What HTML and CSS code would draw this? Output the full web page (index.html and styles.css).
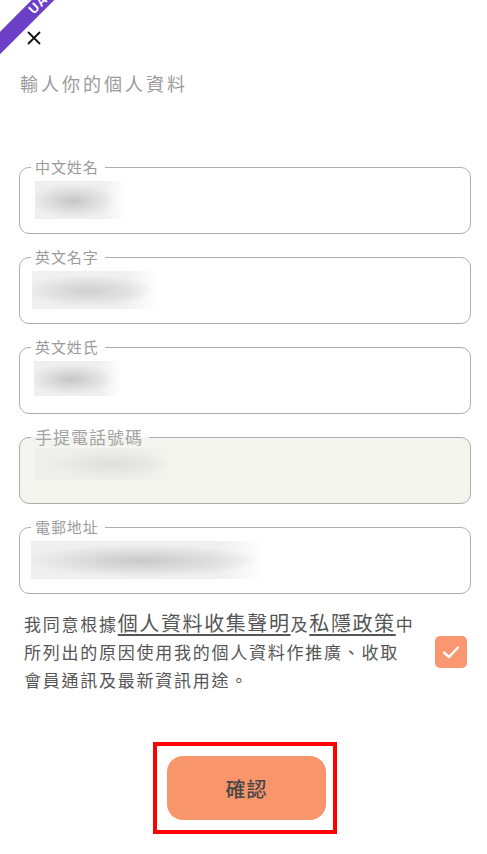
FILE: index.html
```html
<!DOCTYPE html>
<html lang="zh-Hant">

<head>
    <meta charset="UTF-8">
    <meta name="viewport" content="width=device-width, initial-scale=1.0">
    <title>個人資料</title>
    <link rel="stylesheet" href="styles.css">
</head>

<body>
    <div class="ribbon"><span>UAT</span></div>

    <header class="top">
        <button class="close" aria-label="關閉">
            <svg width="14" height="14" viewBox="0 0 14 14">
                <path d="M1.5 1.5 L12.5 12.5 M12.5 1.5 L1.5 12.5" stroke="#111" stroke-width="1.8" stroke-linecap="round" />
            </svg>
        </button>
        <h1 class="title">輸人你的個人資料</h1>
    </header>

    <form class="form">
        <fieldset class="field">
            <legend>中文姓名</legend>
            <div class="value"><span class="blur blur-1"></span></div>
        </fieldset>
        <fieldset class="field">
            <legend>英文名字</legend>
            <div class="value"><span class="blur blur-2"></span></div>
        </fieldset>
        <fieldset class="field">
            <legend>英文姓氏</legend>
            <div class="value"><span class="blur blur-3"></span></div>
        </fieldset>
        <fieldset class="field field-disabled">
            <legend>手提電話號碼</legend>
            <div class="value"><span class="blur blur-4"></span></div>
        </fieldset>
        <fieldset class="field">
            <legend>電郵地址</legend>
            <div class="value"><span class="blur blur-5"></span></div>
        </fieldset>

        <div class="consent">
            <p>我同意根據<a href="#">個人資料收集聲明</a>及<a href="#">私隱政策</a>中所列出的原因使用我的個人資料作推廣、收取會員通訊及最新資訊用途。</p>
            <span class="check">
                <svg width="20" height="16" viewBox="0 0 20 16">
                    <path d="M3 8.5 L8 13 L17 3.5" fill="none" stroke="#fff" stroke-width="2.4" stroke-linecap="round" stroke-linejoin="round" />
                </svg>
            </span>
        </div>

        <div class="submit-wrap">
            <div class="highlight">
                <button type="button" class="submit">確認</button>
            </div>
        </div>
    </form>
</body>

</html>
```

FILE: styles.css
```css
* {
    box-sizing: border-box;
}

body {
    margin: 0;
    background: #fff;
    font-family: "Noto Sans CJK TC", "Noto Sans", sans-serif;
    color: #555;
    min-height: 100vh;
    position: relative;
    overflow: hidden;
}

/* env ribbon in the corner */
.ribbon {
    position: absolute;
    top: 8px;
    left: -28px;
    width: 110px;
    height: 16px;
    background: #6b3fc6;
    color: #fff;
    transform: rotate(-45deg);
    transform-origin: center;
    text-align: center;
    font-family: "Liberation Sans", sans-serif;
    font-weight: bold;
    font-size: 13px;
    line-height: 16px;
    letter-spacing: 1px;
}

.ribbon span {
    display: inline-block;
    margin-left: 40px;
}

.top {
    padding: 31px 20px 0;
}

.close {
    display: block;
    background: none;
    border: 0;
    padding: 0;
    margin-left: 7px;
    width: 14px;
    height: 14px;
    cursor: pointer;
}

.close svg {
    display: block;
}

.title {
    margin: 26px 0 0;
    font-size: 18px;
    font-weight: 400;
    color: #9a9a9a;
    letter-spacing: 3px;
    line-height: 24px;
}

.form {
    padding: 0 16px 0 19px;
    margin-top: 62px;
}

.field {
    margin: 0 0 13px;
    padding: 0 12px 0 12px;
    border: 1.5px solid #adadad;
    border-radius: 10px;
    height: 77px;
}

.field legend {
    padding: 0 6px 0 4px;
    margin-left: -1px;
    font-size: 15px;
    line-height: 20px;
    color: #9a9a9a;
    letter-spacing: 0.9px;
}

.field-disabled {
    background: #f5f5f0;
}

.field-disabled legend {
    font-size: 17px;
    letter-spacing: 1px;
    color: #a3a3a3;
}

.value {
    padding-top: 4px;
    height: 44px;
}

.blur {
    display: block;
    height: 38px;
    background:
        radial-gradient(ellipse 48% 45% at 42% 52%, #c6c6c6 0%, #dcdcdc 50%, rgba(240, 240, 240, 0) 100%),
        linear-gradient(to right, #efefef 75%, #fff 100%);
}

.blur-1 {
    width: 90px;
    margin-left: 3px;
}

.blur-2 {
    width: 126px;
    margin-left: 0;
    background:
        radial-gradient(ellipse 52% 42% at 45% 52%, #cfcfcf 0%, #e0e0e0 55%, rgba(240, 240, 240, 0) 100%),
        linear-gradient(to right, #f0f0f0 75%, #fff 100%);
}

.blur-3 {
    width: 88px;
    margin-left: 2px;
    height: 35px;
}

.field-disabled .value {
    padding-top: 1px;
}

.blur-4 {
    width: 137px;
    height: 32px;
    margin-left: 3px;
    background:
        radial-gradient(ellipse 45% 45% at 55% 50%, #dededa 0%, #e8e8e4 60%, rgba(238, 238, 234, 0) 100%),
        linear-gradient(to right, #eeeeea 75%, #f5f5f0 100%);
}

.blur-5 {
    width: 234px;
    margin-left: -1px;
    background:
        radial-gradient(ellipse 50% 42% at 48% 52%, #c9c9c9 0%, #dddddd 55%, rgba(240, 240, 240, 0) 100%),
        linear-gradient(to right, #efefef 80%, #fff 100%);
}

.consent {
    display: flex;
    align-items: center;
    justify-content: space-between;
    margin: 16px 4px 0 5px;
}

.consent p {
    margin: 0;
    width: 392px;
    font-size: 17px;
    line-height: 28px;
    letter-spacing: 1.75px;
    color: #555;
}

.consent a {
    color: #555;
    font-size: 20px;
    line-height: 20px;
    letter-spacing: 1.6px;
    text-decoration: underline;
    text-underline-offset: 3px;
}

.check {
    flex: none;
    width: 32px;
    height: 32px;
    border-radius: 5px;
    background: #fa9670;
    display: flex;
    align-items: center;
    justify-content: center;
}

.submit-wrap {
    display: flex;
    justify-content: center;
    margin-top: 48px;
}

.highlight {
    border: 4px solid #f00;
    padding: 10px 7px 10px 10px;
}

.submit {
    display: block;
    width: 159px;
    height: 64px;
    border: 0;
    border-radius: 16px;
    background: #f9956b;
    color: #474747;
    font-family: inherit;
    font-size: 20px;
    font-weight: 500;
    letter-spacing: 1px;
    cursor: pointer;
}
```
